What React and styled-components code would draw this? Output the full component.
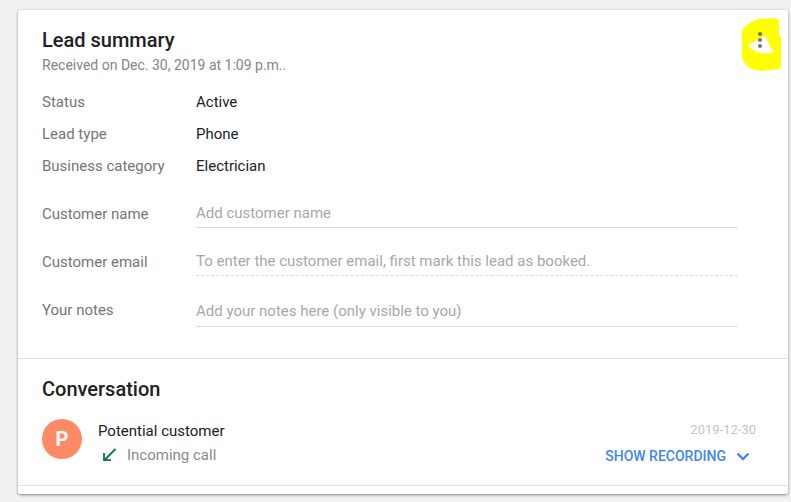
import styled, { createGlobalStyle } from 'styled-components'

const GlobalStyle = createGlobalStyle`
   html, body {
      margin: 0;
      padding: 0;
      background: #f1f1f1;
      font-family: Roboto, "Liberation Sans", sans-serif;
   }
`

const Page = styled.div`
   width: 791px;
   height: 502px;
   padding: 10px 3px 0 18px;
   box-sizing: border-box;
   overflow: hidden;
`

const Card = styled.div`
   position: relative;
   height: 484px;
   background: #fff;
   border-radius: 2px;
   box-shadow: 0 1px 3px rgba(0, 0, 0, 0.45);
   display: flex;
   flex-direction: column;
`

const Summary = styled.section`
   height: 349px;
   box-sizing: border-box;
   padding: 18px 50px 0 24px;
   border-bottom: 1px solid #dfdfdf;
`

const Title = styled.h2`
   margin: 0;
   font-size: 20px;
   line-height: 24px;
   font-weight: 500;
   color: #212121;
`

const Subtitle = styled.div`
   margin-top: 3px;
   margin-bottom: 11px;
   font-size: 14px;
   line-height: 20px;
   color: #80868b;
`

const InfoRow = styled.div`
   display: flex;
   align-items: center;
   height: 32px;
   font-size: 15px;
`

const Label = styled.div`
   width: 154px;
   flex: none;
   color: #757575;
`

const FieldLabel = styled(Label)`
   line-height: ${(props) => (props.$notes ? '26px' : '32px')};
`

const Value = styled.div`
   color: #202124;
`

const Fields = styled.div`
   margin-top: 16px;
   display: flex;
   flex-direction: column;
   gap: 18px;
`

const FieldRow = styled.div`
   display: flex;
   align-items: flex-start;
   height: 30px;
   margin-top: ${(props) => (props.$notes ? '3px' : '0')};
   font-size: 15px;
`

const FieldText = styled.div`
   flex: 1;
   height: 30px;
   line-height: ${(props) => (props.$notes ? '28px' : '30px')};
   box-sizing: border-box;
   color: #a8a8a8;
   border-bottom: 1px ${(props) => (props.$dashed ? 'dashed' : 'solid')} #dcdcdc;
`

const Conversation = styled.section`
   flex: 1;
   padding: 18px 32px 0 24px;
`

const CallRow = styled.div`
   display: flex;
   margin-top: 16px;
   height: 67px;
`

const Avatar = styled.div`
   width: 40px;
   height: 40px;
   flex: none;
   border-radius: 50%;
   background: #ff8a65;
   color: #fff;
   display: flex;
   align-items: center;
   justify-content: center;
   font-size: 20px;
   font-weight: 700;
   margin-top: 2px;
   margin-right: 16px;
`

const CallInfo = styled.div`
   flex: 1;
   padding-top: 2px;
   font-size: 15px;
`

const CallerName = styled.div`
   line-height: 24px;
   color: #212121;
`

const CallType = styled.div`
   display: flex;
   align-items: center;
   line-height: 24px;
   color: #8a8a8a;
   gap: 10px;
   padding-left: 3px;
`

const CallMeta = styled.div`
   display: flex;
   flex-direction: column;
   align-items: flex-end;
   padding-top: 3px;
`

const DateText = styled.div`
   font-size: 13px;
   line-height: 20px;
   color: #c4c4c4;
`

const ShowRecording = styled.div`
   display: flex;
   align-items: center;
   gap: 10px;
   margin-top: 6px;
   padding-right: 6px;
   font-size: 14px;
   font-weight: 500;
   line-height: 20px;
   color: #4285f4;
`

const BottomLine = styled.div`
   height: 1px;
   background: #dfdfdf;
   margin-bottom: 8px;
`

const Annotation = styled.svg`
   position: absolute;
   left: 724px;
   top: 8px;
`

function App() {
   return (
      <>
         <GlobalStyle />
         <Page>
            <Card>
               <Summary>
                  <Title>Lead summary</Title>
                  <Subtitle>Received on Dec. 30, 2019 at 1:09 p.m..</Subtitle>
                  <InfoRow>
                     <Label>Status</Label>
                     <Value>Active</Value>
                  </InfoRow>
                  <InfoRow>
                     <Label>Lead type</Label>
                     <Value>Phone</Value>
                  </InfoRow>
                  <InfoRow>
                     <Label>Business category</Label>
                     <Value>Electrician</Value>
                  </InfoRow>
                  <Fields>
                     <FieldRow>
                        <FieldLabel>Customer name</FieldLabel>
                        <FieldText>Add customer name</FieldText>
                     </FieldRow>
                     <FieldRow>
                        <FieldLabel>Customer email</FieldLabel>
                        <FieldText $dashed>To enter the customer email, first mark this lead as booked.</FieldText>
                     </FieldRow>
                     <FieldRow $notes>
                        <FieldLabel $notes>Your notes</FieldLabel>
                        <FieldText $notes>Add your notes here (only visible to you)</FieldText>
                     </FieldRow>
                  </Fields>
               </Summary>
               <Conversation>
                  <Title>Conversation</Title>
                  <CallRow>
                     <Avatar>P</Avatar>
                     <CallInfo>
                        <CallerName>Potential customer</CallerName>
                        <CallType>
                           <svg width="16" height="16" viewBox="0 0 16 16">
                              <path d="M14.5 2 L3.5 13 M3 6 V13.2 H10" fill="none" stroke="#0b7a3e" strokeWidth="1.8" />
                           </svg>
                           Incoming call
                        </CallType>
                     </CallInfo>
                     <CallMeta>
                        <DateText>2019-12-30</DateText>
                        <ShowRecording>
                           SHOW RECORDING
                           <svg width="14" height="9" viewBox="0 0 14 9">
                              <path d="M1.5 1.5 L7 7 L12.5 1.5" fill="none" stroke="#4285f4" strokeWidth="2.4" />
                           </svg>
                        </ShowRecording>
                     </CallMeta>
                  </CallRow>
               </Conversation>
               <BottomLine />
               <Annotation width="40" height="54" viewBox="0 0 40 54">
                  <path
                     d="M0 12 L6 6 L16 1 L32 0 L37 2 L37 16 L39 20 L39 48 L37 51 L17 53 L7 50 L2 44 L0 40 Z"
                     fill="#ffff00"
                  />
                  <path d="M24 17 C25 24 28 29 32 34 C28 36 18 36 13 33 C9 31 6 29 7 27 C10 24 18 22 24 17 Z" fill="#fff" />
                  <circle cx="18" cy="16" r="2" fill="#6f6f00" />
                  <circle cx="18" cy="22" r="2" fill="#757575" />
                  <circle cx="18" cy="28" r="2" fill="#757575" />
               </Annotation>
            </Card>
         </Page>
      </>
   )
}

export default App
